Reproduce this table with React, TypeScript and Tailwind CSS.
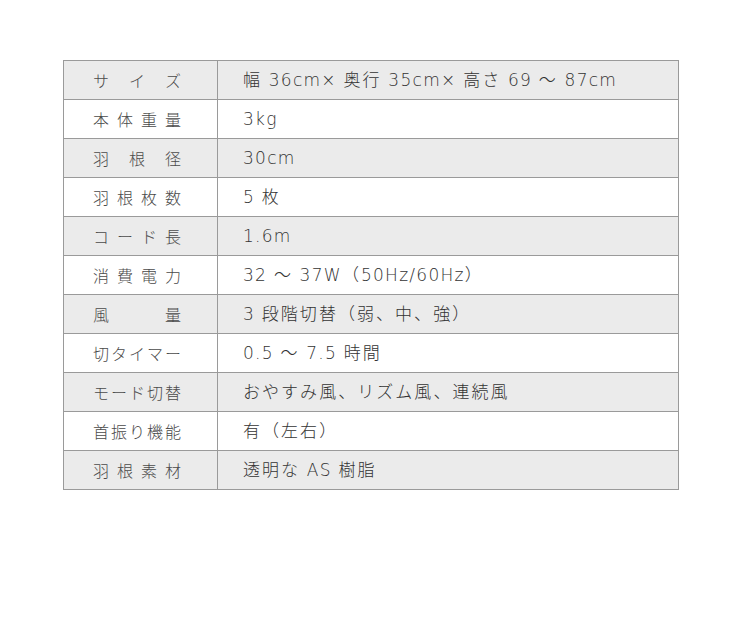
const specs: [string, string][] = [
  ['サイズ', '幅 36cm× 奥行 35cm× 高さ 69 ～ 87cm'],
  ['本体重量', '3kg'],
  ['羽根径', '30cm'],
  ['羽根枚数', '5 枚'],
  ['コード長', '1.6m'],
  ['消費電力', '32 ～ 37W（50Hz/60Hz）'],
  ['風量', '3 段階切替（弱、中、強）'],
  ['切タイマー', '0.5 ～ 7.5 時間'],
  ['モード切替', 'おやすみ風、リズム風、連続風'],
  ['首振り機能', '有（左右）'],
  ['羽根素材', '透明な AS 樹脂'],
]

const cjk = /^[\u3000-\u9fff\uff00-\uffef]+$/

function Label({ text }: { text: string }) {
  return (
    <div className="flex w-[88px] justify-between">
      {Array.from(text).map((c, i) => (
        <span key={i}>{c}</span>
      ))}
    </div>
  )
}

function Value({ text }: { text: string }) {
  // wide letter-spacing for Japanese runs, tighter for latin runs
  const parts = text.split(/([\u3000-\u9fff\uff00-\uffef]+)/).filter(Boolean)
  return (
    <>
      {parts.map((p, i) => (
        <span key={i} className={cjk.test(p) ? 'tracking-[0.12em]' : 'tracking-[0.075em]'}>
          {p}
        </span>
      ))}
    </>
  )
}

export default function App() {
  return (
    <div
      className="min-h-[630px] w-[740px] bg-white pt-[60px] text-[16px] text-[#4a4a4a]"
      style={{ fontFamily: '"Noto Sans CJK JP", "Noto Sans", sans-serif' }}
    >
      <table className="ml-[63px] w-[616px] border-collapse">
        <tbody>
          {specs.map(([label, value], i) => (
            <tr key={label} className={i % 2 === 0 ? 'bg-[#ebebeb]' : 'bg-white'}>
              <td className="h-[39px] w-[154px] border border-[#9a9a9a] pl-[29px] align-middle font-light">
                <Label text={label} />
              </td>
              <td
                className="h-[39px] border border-[#9a9a9a] pt-[2px] pl-[25px] align-middle text-[17px] font-extralight text-[#333]"
                style={{ fontFamily: '"DejaVu Sans", "Noto Sans CJK JP", sans-serif' }}
              >
                <Value text={value} />
              </td>
            </tr>
          ))}
        </tbody>
      </table>
    </div>
  )
}
